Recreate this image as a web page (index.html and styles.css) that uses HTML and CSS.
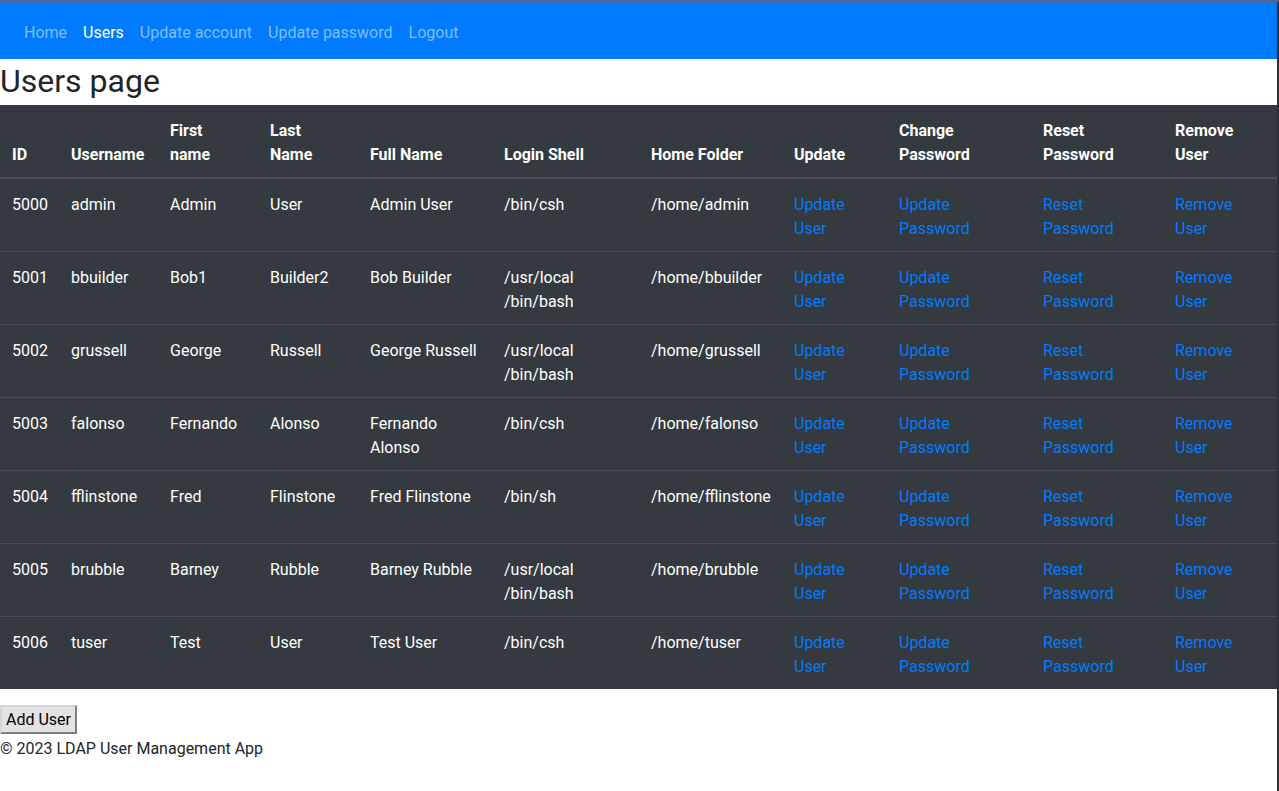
FILE: index.html
```html
<!DOCTYPE html>
<html lang="en">
<head>
<meta charset="utf-8">
<title>Users page</title>
<link rel="stylesheet" href="styles.css">
</head>
<body>
<div class="page">
  <nav class="navbar">
    <a class="nav-link" href="#">Home</a>
    <a class="nav-link active" href="#">Users</a>
    <a class="nav-link" href="#">Update account</a>
    <a class="nav-link" href="#">Update password</a>
    <a class="nav-link" href="#">Logout</a>
  </nav>
  <h2 class="title">Users page</h2>
  <table class="users">
    <colgroup>
      <col style="width:59px"><col style="width:99px"><col style="width:100px"><col style="width:100px"><col style="width:134px"><col style="width:147px"><col style="width:143px"><col style="width:105px"><col style="width:144px"><col style="width:132px"><col style="width:114px">
    </colgroup>
    <thead>
      <tr>
        <th>ID</th><th>Username</th><th>First<br>name</th><th>Last<br>Name</th><th>Full Name</th><th>Login Shell</th><th>Home Folder</th><th>Update</th><th>Change<br>Password</th><th>Reset<br>Password</th><th>Remove<br>User</th>
      </tr>
    </thead>
    <tbody>
      <tr><td>5000</td><td>admin</td><td>Admin</td><td>User</td><td>Admin User</td><td>/bin/csh</td><td>/home/admin</td><td><a href="#">Update<br>User</a></td><td><a href="#">Update<br>Password</a></td><td><a href="#">Reset<br>Password</a></td><td><a href="#">Remove<br>User</a></td></tr>
      <tr><td>5001</td><td>bbuilder</td><td>Bob1</td><td>Builder2</td><td>Bob Builder</td><td>/usr/local<br>/bin/bash</td><td>/home/bbuilder</td><td><a href="#">Update<br>User</a></td><td><a href="#">Update<br>Password</a></td><td><a href="#">Reset<br>Password</a></td><td><a href="#">Remove<br>User</a></td></tr>
      <tr><td>5002</td><td>grussell</td><td>George</td><td>Russell</td><td>George Russell</td><td>/usr/local<br>/bin/bash</td><td>/home/grussell</td><td><a href="#">Update<br>User</a></td><td><a href="#">Update<br>Password</a></td><td><a href="#">Reset<br>Password</a></td><td><a href="#">Remove<br>User</a></td></tr>
      <tr><td>5003</td><td>falonso</td><td>Fernando</td><td>Alonso</td><td>Fernando<br>Alonso</td><td>/bin/csh</td><td>/home/falonso</td><td><a href="#">Update<br>User</a></td><td><a href="#">Update<br>Password</a></td><td><a href="#">Reset<br>Password</a></td><td><a href="#">Remove<br>User</a></td></tr>
      <tr><td>5004</td><td>fflinstone</td><td>Fred</td><td>Flinstone</td><td>Fred Flinstone</td><td>/bin/sh</td><td>/home/fflinstone</td><td><a href="#">Update<br>User</a></td><td><a href="#">Update<br>Password</a></td><td><a href="#">Reset<br>Password</a></td><td><a href="#">Remove<br>User</a></td></tr>
      <tr><td>5005</td><td>brubble</td><td>Barney</td><td>Rubble</td><td>Barney Rubble</td><td>/usr/local<br>/bin/bash</td><td>/home/brubble</td><td><a href="#">Update<br>User</a></td><td><a href="#">Update<br>Password</a></td><td><a href="#">Reset<br>Password</a></td><td><a href="#">Remove<br>User</a></td></tr>
      <tr><td>5006</td><td>tuser</td><td>Test</td><td>User</td><td>Test User</td><td>/bin/csh</td><td>/home/tuser</td><td><a href="#">Update<br>User</a></td><td><a href="#">Update<br>Password</a></td><td><a href="#">Reset<br>Password</a></td><td><a href="#">Remove<br>User</a></td></tr>
    </tbody>
  </table>
  <div class="actions"><button class="btn-add" type="button">Add User</button></div>
  <footer class="footer">© 2023 LDAP User Management App</footer>
</div>
</body>
</html>
```
FILE: styles.css
```css
* { box-sizing: border-box; }
html, body { margin: 0; padding: 0; }
body {
  font-family: Roboto, "Liberation Sans", sans-serif;
  font-size: 16px;
  line-height: 1.5;
  color: #212529;
  background: #fff;
}
.page {
  min-height: 100vh;
  border-top: 3px solid #4568a6;
  border-right: 2px solid #2c2f33;
}
.navbar {
  display: flex;
  align-items: center;
  background: #007bff;
  padding: 10px 16px 6px;
}
.nav-link {
  display: block;
  padding: 8px;
  color: rgba(255, 255, 255, 0.5);
  text-decoration: none;
}
.nav-link.active { color: #fff; }
.title {
  margin: 0 0 5px;
  padding-top: 3px;
  font-size: 32px;
  font-weight: 400;
  line-height: 1.2;
}
.users {
  width: 100%;
  table-layout: fixed;
  border-collapse: separate;
  border-spacing: 0;
  background: #343a40;
  color: #fff;
  margin-bottom: 16px;
}
.users th, .users td {
  padding: 14px 12px 10px;
  text-align: left;
  vertical-align: top;
  border-top: 1px solid #454d55;
}
.users thead th {
  vertical-align: bottom;
  border-top: 0;
  border-bottom: 2px solid #454d55;
  font-weight: 700;
}
.users tbody tr:first-child td { border-top: 0; }
.users a { color: #007bff; text-decoration: none; }
.actions { line-height: 1.5; }
.btn-add {
  font: inherit;
  line-height: 1.5;
  margin: 0;
  padding: 1px 4px 0;
  color: #000;
  background: #e3e3e3;
  border: 2px outset #d4d4d4;
  border-radius: 0;
}
.footer { padding-top: 3px; }
```
